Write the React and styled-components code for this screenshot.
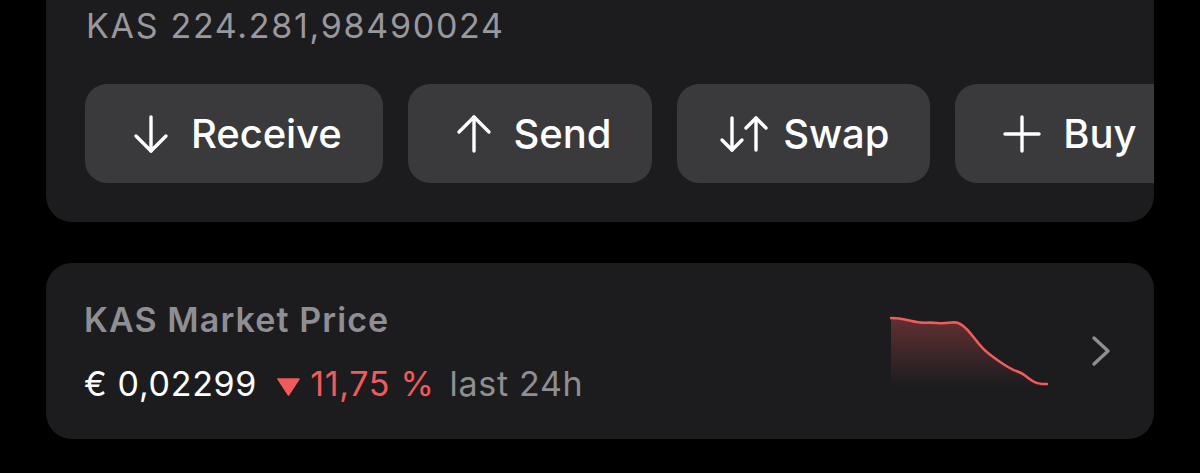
import React from "react";
import styled, { createGlobalStyle } from "styled-components";

const Global = createGlobalStyle`
  html, body { margin: 0; padding: 0; background: #000; }
  body { font-family: Inter, "Noto Sans", "Liberation Sans", sans-serif; -webkit-font-smoothing: antialiased; }
`;

const Page = styled.div`
  width: 1200px;
  height: 473px;
  overflow: hidden;
  background: #000;
  padding: 0 46px;
  box-sizing: border-box;
  display: flex;
  flex-direction: column;
  gap: 41px;
`;

const WalletCard = styled.section`
  background: #1c1c1e;
  border-radius: 0 0 26px 26px;
  padding: 5px 0 39px 39px;
  overflow: hidden;
  display: flex;
  flex-direction: column;
  gap: 37px;
`;

const Balance = styled.div`
  color: #98989e;
  font-size: 34px;
  line-height: 42px;
  letter-spacing: 1.7px;
  padding-left: 1px;
`;

const ActionRow = styled.div`
  display: flex;
  gap: 25px;
  overflow: hidden;
`;

const ActionButton = styled.button`
  flex: none;
  height: 99px;
  border: 0;
  border-radius: 22px;
  background: #3a3a3c;
  color: #fff;
  display: flex;
  align-items: center;
  gap: ${(p) => p.$gap || 22}px;
  padding: 0 41px 0 ${(p) => p.$pl || 48}px;
  font-family: inherit;
  font-size: 40px;
  font-weight: 500;
  letter-spacing: -0.1px;
`;

const PriceCard = styled.section`
  background: #1c1c1e;
  border-radius: 26px;
  height: 176px;
  box-sizing: border-box;
  padding: 0 43px 0 38px;
  display: flex;
  align-items: center;
`;

const PriceInfo = styled.div`
  flex: 1;
  display: flex;
  flex-direction: column;
  gap: 20px;
  margin-top: 2px;
`;

const PriceTitle = styled.div`
  color: #8e8e93;
  font-size: 34px;
  font-weight: 600;
  line-height: 44px;
  letter-spacing: 1.1px;
`;

const PriceLine = styled.div`
  display: flex;
  align-items: baseline;
  gap: 12px;
  font-size: 34px;
  line-height: 44px;
  letter-spacing: 0.7px;
`;

const Price = styled.span`
  color: #fff;
  margin-right: 8px;
`;

const Change = styled.span`
  color: #f25a5c;
  display: flex;
  align-items: baseline;
  gap: 10px;
  margin-right: 3px;
`;

const Period = styled.span`
  color: #8e8e93;
`;

const Chart = styled.svg`
  display: block;
  flex: none;
`;

const Chevron = styled.svg`
  display: block;
  flex: none;
  margin-left: 43px;
`;

const ArrowDown = () => (
  <svg width="36" height="40" viewBox="0 0 36 40" fill="none" stroke="#fff" strokeWidth="3.4" strokeLinecap="round" strokeLinejoin="round">
    <path d="M18 3v34" />
    <path d="M3 22l15 15 15-15" />
  </svg>
);

const ArrowUp = () => (
  <svg width="36" height="40" viewBox="0 0 36 40" fill="none" stroke="#fff" strokeWidth="3.4" strokeLinecap="round" strokeLinejoin="round">
    <path d="M18 37V3" />
    <path d="M3 18L18 3l15 15" />
  </svg>
);

const SwapIcon = () => (
  <svg width="50" height="40" viewBox="0 0 50 40" fill="none" stroke="#fff" strokeWidth="3.4" strokeLinecap="round" strokeLinejoin="round">
    <path d="M13 4v32" />
    <path d="M3 26l10 10 10-10" />
    <path d="M37 36V4" />
    <path d="M27 14L37 4l10 10" />
  </svg>
);

const PlusIcon = () => (
  <svg width="38" height="40" viewBox="0 0 38 40" fill="none" stroke="#fff" strokeWidth="3.4" strokeLinecap="round">
    <path d="M19 3v34" />
    <path d="M2 20h34" />
  </svg>
);

const Triangle = () => (
  <svg width="23" height="18" viewBox="0 0 23 18">
    <path d="M1 1h21L11.5 17z" fill="#f25a5c" stroke="#f25a5c" strokeWidth="1.5" strokeLinejoin="round" />
  </svg>
);

const points = [
  [0, 2], [10, 2.5], [29, 7], [41, 6.5], [52, 7.5], [64, 6], [69, 7.5], [76, 13], [84, 23], [92, 33],
  [102, 41], [112, 48], [122, 54], [131, 57], [137, 62], [146, 68], [156, 68]
];

function smooth(pts) {
  let d = `M${pts[0][0]} ${pts[0][1]}`;
  for (let i = 1; i < pts.length; i++) {
    const [x0, y0] = pts[i - 1];
    const [x1, y1] = pts[i];
    const mx = (x0 + x1) / 2;
    d += ` Q${x0} ${y0} ${mx} ${(y0 + y1) / 2}`;
    if (i === pts.length - 1) d += ` T${x1} ${y1}`;
  }
  return d;
}

const linePath = smooth(points.map(([x, y]) => [x + 1, y + 1]));
const areaPath = `${linePath} L157 72 L1 72 Z`;

export default function App() {
  return (
    <>
      <Global />
      <Page>
        <WalletCard>
          <Balance>KAS 224.281,98490024</Balance>
          <ActionRow>
            <ActionButton>
              <ArrowDown />
              Receive
            </ActionButton>
            <ActionButton>
              <ArrowUp />
              Send
            </ActionButton>
            <ActionButton $pl={42} $gap={14}>
              <SwapIcon />
              Swap
            </ActionButton>
            <ActionButton>
              <PlusIcon />
              Buy
            </ActionButton>
          </ActionRow>
        </WalletCard>
        <PriceCard>
          <PriceInfo>
            <PriceTitle>KAS Market Price</PriceTitle>
            <PriceLine>
              <Price>€ 0,02299</Price>
              <Change>
                <Triangle />
                11,75 %
              </Change>
              <Period>last 24h</Period>
            </PriceLine>
          </PriceInfo>
          <Chart width="158" height="72" viewBox="0 0 158 72">
            <defs>
              <linearGradient id="fade" x1="0" y1="0" x2="0" y2="1">
                <stop offset="0" stopColor="#f25a5c" stopOpacity="0.32" />
                <stop offset="1" stopColor="#f25a5c" stopOpacity="0" />
              </linearGradient>
            </defs>
            <path d={areaPath} fill="url(#fade)" />
            <path d={linePath} fill="none" stroke="#f25a5c" strokeWidth="2.6" strokeLinecap="round" strokeLinejoin="round" />
          </Chart>
          <Chevron width="20" height="32" viewBox="0 0 20 32" fill="none" stroke="#8e8e93" strokeWidth="3.4" strokeLinecap="round" strokeLinejoin="round">
            <path d="M3 3l14 13L3 29" />
          </Chevron>
        </PriceCard>
      </Page>
    </>
  );
}
